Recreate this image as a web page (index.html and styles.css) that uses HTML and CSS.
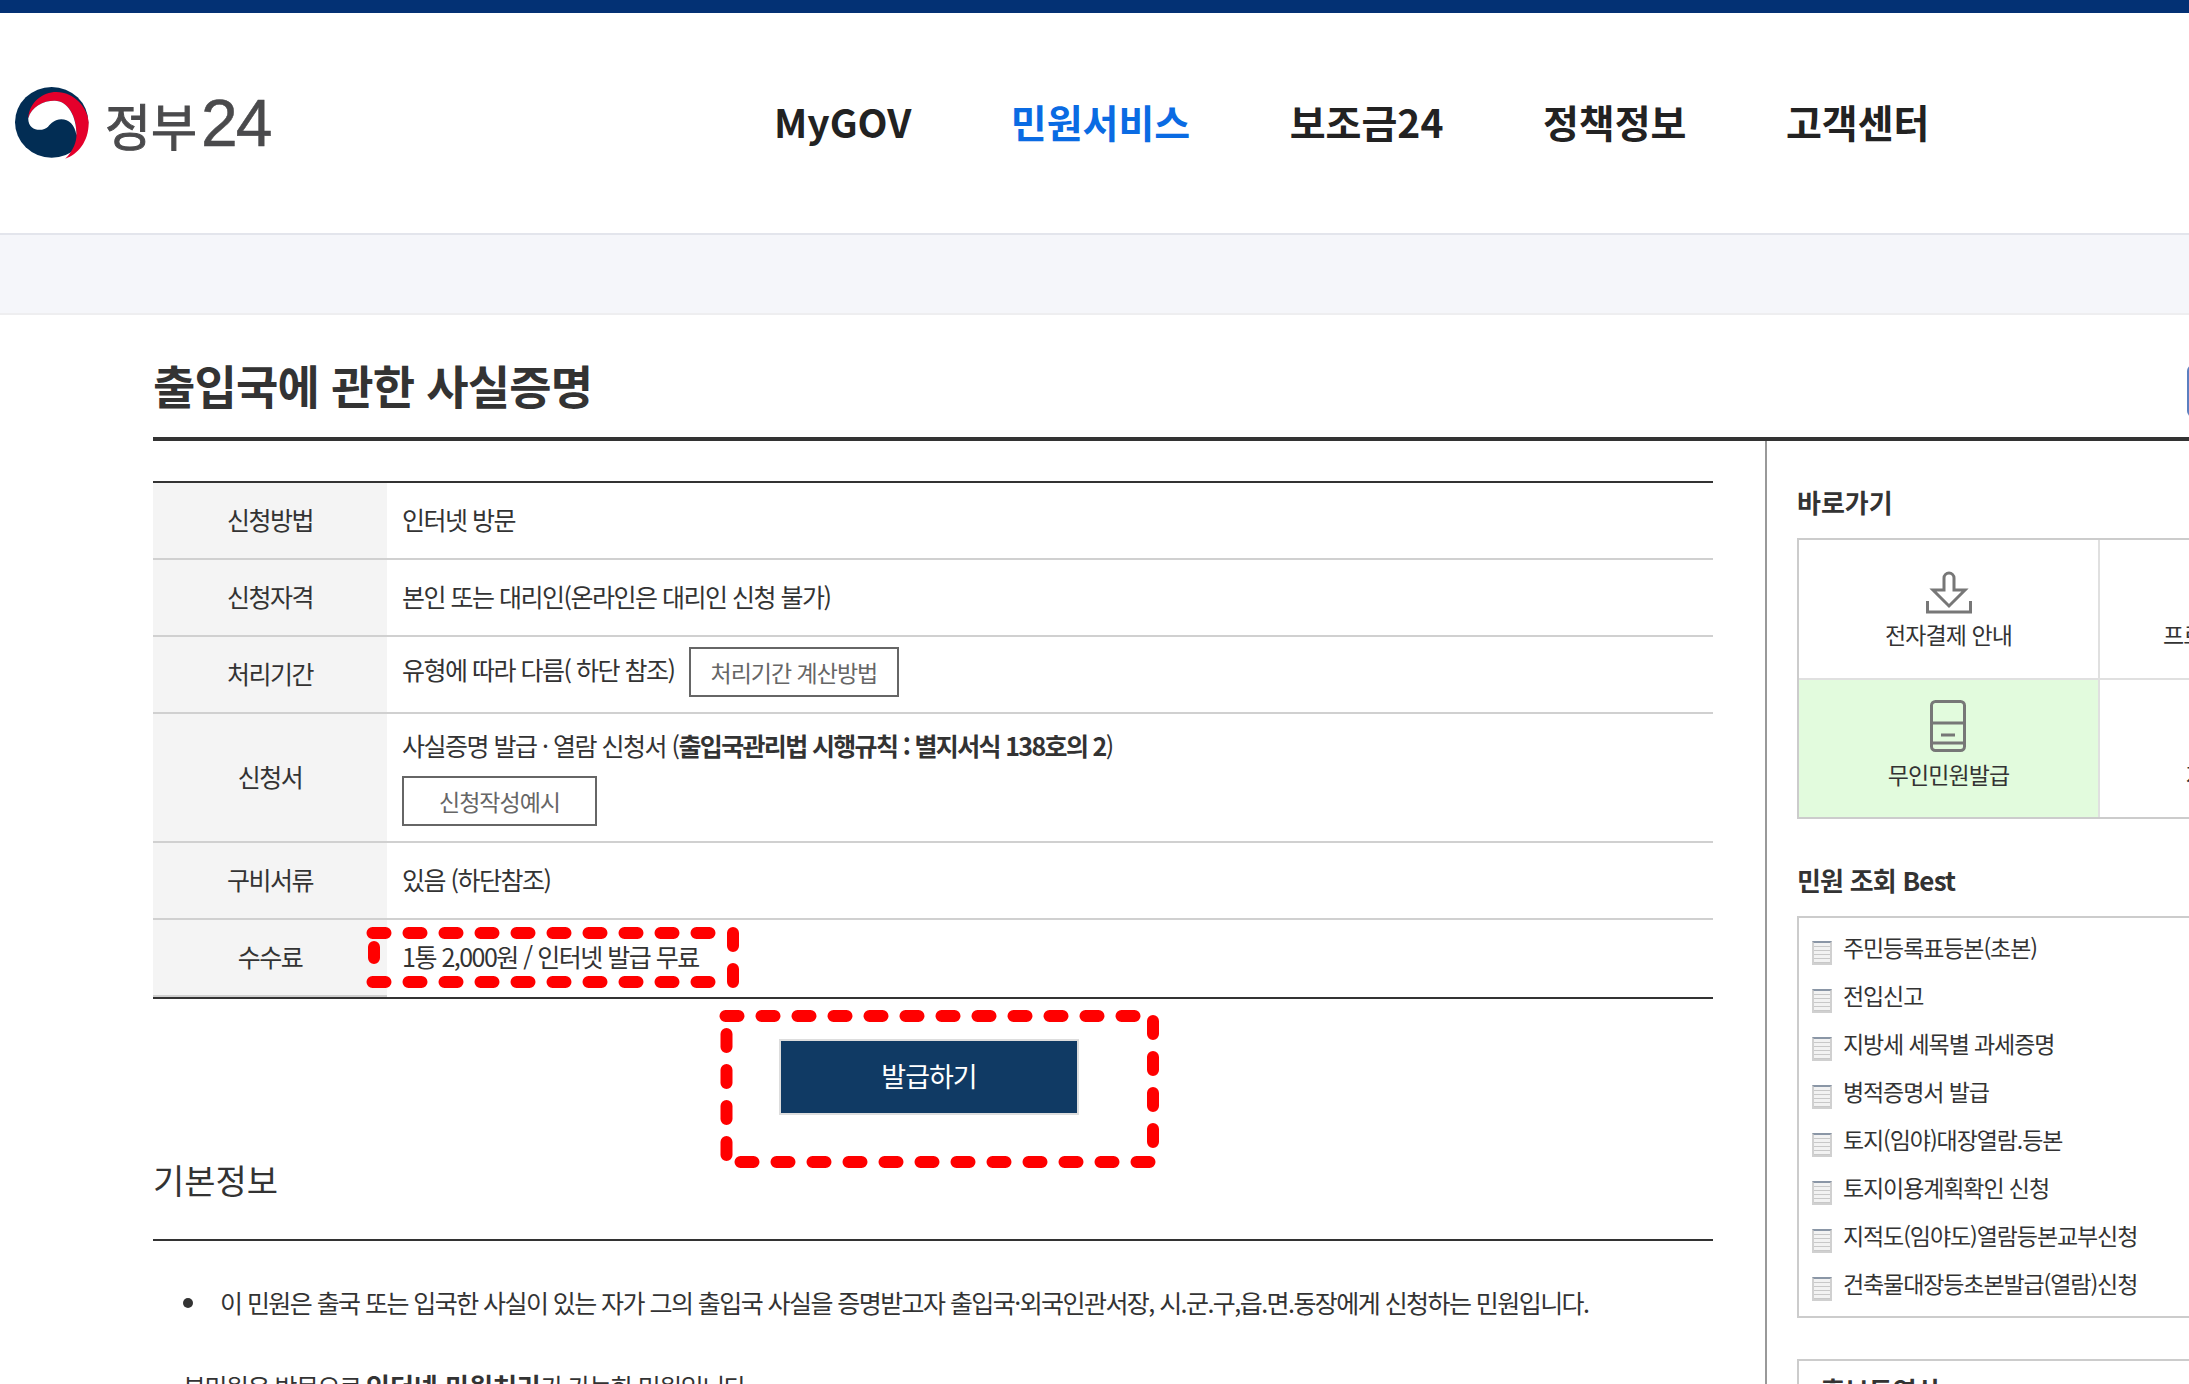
FILE: index.html
```html
<!DOCTYPE html>
<html lang="ko">
<head>
  <meta charset="UTF-8" />
  <title>출입국에 관한 사실증명 | 정부24</title>
  <link rel="stylesheet" href="styles.css">
</head>
<body>
  <div class="top-bar"></div>

  <header class="header">
    <a class="logo" href="#">
      <svg class="logo-mark" viewBox="45 80 224 218" aria-hidden="true">
        <ellipse cx="156" cy="187" rx="111" ry="107" fill="#022d54"/>
        <path d="M85 175 C88 125 130 95 170 95 C225 95 268 145 268 190 C268 245 235 285 197 297 C222 272 232 245 231 222 C232 170 205 122 165 122 C130 122 95 140 85 175 Z" fill="#e4002b"/>
        <path d="M85 175 C95 140 130 122 165 122 C205 122 232 170 231 226 C226 195 208 178 185 178 C165 178 155 190 145 200 C130 216 85 215 85 175 Z" fill="#fff"/>
      </svg>
      <span class="logo-text">정부<span class="logo-num">24</span></span>
    </a>
    <nav class="gnb">
      <a href="#">MyGOV</a>
      <a href="#" class="on">민원서비스</a>
      <a href="#">보조금24</a>
      <a href="#">정책정보</a>
      <a href="#">고객센터</a>
    </nav>
  </header>

  <div class="band"></div>

  <div class="content">
    <div class="title-row">
      <h1>출입국에 관한 사실증명</h1>
      <span class="title-btn"></span>
    </div>

    <div class="columns">
      <main class="main">
        <table class="summary">
          <tr>
            <th>신청방법</th>
            <td>인터넷 방문</td>
          </tr>
          <tr>
            <th>신청자격</th>
            <td>본인 또는 대리인(온라인은 대리인 신청 불가)</td>
          </tr>
          <tr>
            <th>처리기간</th>
            <td>유형에 따라 다름( 하단 참조) <a class="btn-line btn-calc" href="#">처리기간 계산방법</a></td>
          </tr>
          <tr class="tall">
            <th>신청서</th>
            <td>
              <div class="form-name">사실증명 발급 · 열람 신청서 (<strong>출입국관리법 시행규칙 : 별지서식 138호의 2</strong>)</div>
              <a class="btn-line btn-sample" href="#">신청작성예시</a>
            </td>
          </tr>
          <tr>
            <th>구비서류</th>
            <td>있음 (하단참조)</td>
          </tr>
          <tr class="last">
            <th>수수료</th>
            <td>1통 2,000원 / 인터넷 발급 무료</td>
          </tr>
        </table>

        <div class="actions">
          <a class="btn-issue" href="#">발급하기</a>
        </div>

        <h2 class="info-title">기본정보</h2>
        <ul class="info-list">
          <li>이 민원은 출국 또는 입국한 사실이 있는 자가 그의 출입국 사실을 증명받고자 출입국·외국인관서장, 시.군.구,읍.면.동장에게 신청하는 민원입니다.</li>
        </ul>
        <p class="info-note">본민원은 방문으로 <strong>인터넷 민원처리</strong>가 가능한 민원입니다.</p>
      </main>

      <aside class="side">
        <h3>바로가기</h3>
        <div class="quick">
          <a class="quick-cell" href="#">
            <svg class="quick-icon" viewBox="0 0 56 56" aria-hidden="true">
              <path d="M23 32 V20 a5 5 0 0 1 10 0 V32 H44 L28 48 L12 32 Z"/>
              <path d="M6.5 43 V54 H49.5 V43"/>
            </svg>
            <span>전자결제 안내</span>
          </a>
          <a class="quick-cell" href="#">
            <span class="quick-icon"></span>
            <span>프로그램 설치 안내</span>
          </a>
          <a class="quick-cell green" href="#">
            <svg class="quick-icon" viewBox="0 0 56 56" aria-hidden="true">
              <rect x="10.5" y="3.5" width="33" height="49" rx="4"/>
              <path d="M10.5 25 H43.5 M10.5 45 H43.5 M20 37 H34"/>
            </svg>
            <span>무인민원발급</span>
          </a>
          <a class="quick-cell" href="#">
            <span class="quick-icon"></span>
            <span>자주찾는 민원</span>
          </a>
        </div>

        <h3 class="best-title">민원 조회 Best</h3>
        <ul class="best">
          <li>주민등록표등본(초본)</li>
          <li>전입신고</li>
          <li>지방세 세목별 과세증명</li>
          <li>병적증명서 발급</li>
          <li>토지(임야)대장열람.등본</li>
          <li>토지이용계획확인 신청</li>
          <li>지적도(임야도)열람등본교부신청</li>
          <li>건축물대장등초본발급(열람)신청</li>
        </ul>

        <div class="promo">홍보동영상</div>
      </aside>
    </div>
  </div>

  <!-- red dashed marks drawn over the page -->
  <svg class="marks" viewBox="0 0 2189 1384" aria-hidden="true">
    <path d="M372.5 933 H710 M733 933 V982 M372.5 982 H710 M374 947 V958"/>
    <path d="M725.5 1016 H1135 M1153 1021 V1142 M740.5 1162 H1151 M726.5 1034 V1155"/>
  </svg>
</body>
</html>
```

FILE: styles.css
```css
* { box-sizing: border-box; }

html, body {
  margin: 0;
  padding: 0;
  height: 1384px;
  overflow: hidden;
}

body {
  position: relative;
  width: 2189px;
  font-family: "Noto Sans CJK KR", "Noto Sans", sans-serif;
  font-size: 25px;
  letter-spacing: -1.5px;
  color: #333;
  background: #fff;
}

a {
  color: inherit;
  text-decoration: none;
}

.top-bar {
  height: 13px;
  background: #033174;
}

.header {
  display: flex;
  align-items: center;
  height: 220px;
  padding-left: 15px;
}

.logo {
  display: flex;
  align-items: center;
  width: 759px;
  gap: 16px;
  margin-top: -1px;
}

.logo-mark {
  width: 74px;
  height: 72px;
}

.logo-text {
  font-size: 50px;
  font-weight: 400;
  line-height: 1;
  letter-spacing: 0;
  color: #4a4a4c;
  -webkit-text-stroke: 1px #4a4a4c;
}

.logo-num {
  margin-left: 4px;
  font-family: "Liberation Sans", sans-serif;
  font-size: 66px;
  letter-spacing: -2px;
  -webkit-text-stroke: 0.5px #4a4a4c;
}

.gnb {
  display: flex;
  gap: 99.5px;
  font-size: 39px;
  font-weight: 700;
  letter-spacing: 0;
  color: #222;
  margin-top: -4px;
}

.gnb .on { color: #0a6be3; }

.band {
  height: 82px;
  background: #f5f6fa;
  border-top: 2px solid #e3e5ec;
  border-bottom: 2px solid #eeeef0;
}

.content {
  margin-left: 153px;
  width: 2300px;
}

.title-row {
  display: flex;
  justify-content: space-between;
  align-items: center;
  height: 126px;
  border-bottom: 4px solid #333;
}

.title-row h1 {
  margin: 0;
  padding-top: 16px;
  font-size: 46px;
  font-weight: 700;
  line-height: 1;
  letter-spacing: -0.8px;
  color: #333;
}

.title-btn {
  width: 100px;
  height: 52px;
  margin: 30px 166px 0 0;
  border-radius: 6px;
  background: #5b7fc0;
}

.columns { display: flex; }

.main {
  width: 1560px;
  padding-top: 40px;
}

.summary {
  width: 100%;
  border-collapse: separate;
  border-spacing: 0;
  border-top: 2px solid #333;
  border-bottom: 2px solid #333;
}

.summary th,
.summary td {
  height: 77px;
  padding: 0 0 3px;
  font-weight: 400;
  border-bottom: 2px solid #d0d0d0;
}

.summary th {
  width: 234px;
  background: #f4f4f4;
  text-align: center;
}

.summary td { padding-left: 15px; }

.summary .tall th,
.summary .tall td { height: 129px; }

.summary .last td { border-bottom-color: #fff; }

.btn-line {
  display: inline-flex;
  align-items: center;
  justify-content: center;
  height: 50px;
  font-size: 23px;
  letter-spacing: -1px;
  color: #666;
  border: 2px solid #666;
}

.btn-calc {
  width: 210px;
  margin: 0 0 2px 9px;
  vertical-align: middle;
}

.btn-sample {
  width: 195px;
  margin-top: 13px;
}

.form-name { line-height: 36px; }

.form-name strong {
  font-weight: 700;
  letter-spacing: -1.65px;
}

.actions {
  display: flex;
  justify-content: center;
  padding-right: 8px;
  margin-top: 40px;
}

.btn-issue {
  display: flex;
  align-items: center;
  justify-content: center;
  width: 300px;
  height: 76px;
  padding-bottom: 3px;
  font-size: 27px;
  letter-spacing: -1px;
  color: #fff;
  background: #103a64;
  border: 2px solid #ddd;
}

.info-title {
  margin: 38px 0 0;
  height: 88px;
  font-size: 34px;
  font-weight: 400;
  line-height: 54px;
  letter-spacing: 0;
  border-bottom: 2px solid #333;
}

.info-list {
  list-style: none;
  margin: 37px 0 0;
  padding-left: 67px;
}

.info-list li {
  position: relative;
  line-height: 48px;
  letter-spacing: -1.56px;
}

.info-list li::before {
  content: "";
  position: absolute;
  left: -37px;
  top: 20px;
  width: 10px;
  height: 10px;
  border-radius: 50%;
  background: #333;
}

.info-note {
  margin: 36px 0 0 30px;
  line-height: 48px;
}

.info-note strong {
  font-size: 26px;
  font-weight: 700;
  letter-spacing: 0;
}

.side {
  flex: 1;
  padding: 41px 0 0 30px;
  margin-left: 52px;
  border-left: 2px solid #999;
  height: 943px;
}

.side h3 {
  margin: 0 0 16px;
  font-size: 26px;
  font-weight: 700;
  line-height: 40px;
  letter-spacing: 0;
  color: #333;
}

.side .best-title { letter-spacing: -0.8px; }

.quick {
  display: grid;
  grid-template-columns: repeat(2, 301px);
  width: 604px;
  border: 2px solid #ccc;
  margin-bottom: 41px;
}

.quick-cell {
  display: flex;
  flex-direction: column;
  align-items: center;
  height: 140px;
  padding-top: 18px;
  font-size: 23px;
  letter-spacing: -0.9px;
  line-height: 30px;
  border-right: 2px solid #e0e0e0;
  border-bottom: 2px solid #e0e0e0;
}

.quick-cell:nth-child(n+3) {
  height: 137px;
  border-bottom: 0;
}

.quick-cell.green { background: #e2fbdd; }

.quick-icon {
  display: block;
  width: 56px;
  height: 56px;
  margin-bottom: 5px;
  fill: none;
  stroke: #777;
  stroke-width: 3;
}

.best {
  list-style: none;
  margin: 0 0 41px;
  padding: 7px 0;
  width: 604px;
  border: 2px solid #ccc;
  height: 402px;
  font-size: 23px;
  letter-spacing: -1.1px;
}

.best li {
  position: relative;
  height: 48px;
  line-height: 45px;
  padding-left: 44px;
}

.best li::before {
  content: "";
  position: absolute;
  left: 13px;
  top: 16px;
  width: 16px;
  height: 20px;
  border: 2px solid #d0d0d0;
  border-top-color: #8a96a6;
  background: repeating-linear-gradient(#f2f2f2 0 3px, #c8c8c8 3px 4px);
}

.promo {
  width: 604px;
  height: 120px;
  padding: 10px 0 0 22px;
  border: 2px solid #ccc;
  font-size: 26px;
  font-weight: 700;
  letter-spacing: 0;
}

.marks {
  position: absolute;
  left: 0;
  top: 0;
  width: 2189px;
  height: 1384px;
  pointer-events: none;
  fill: none;
  stroke: #f00;
  stroke-width: 12;
  stroke-linecap: round;
  stroke-dasharray: 13 23;
}
```
